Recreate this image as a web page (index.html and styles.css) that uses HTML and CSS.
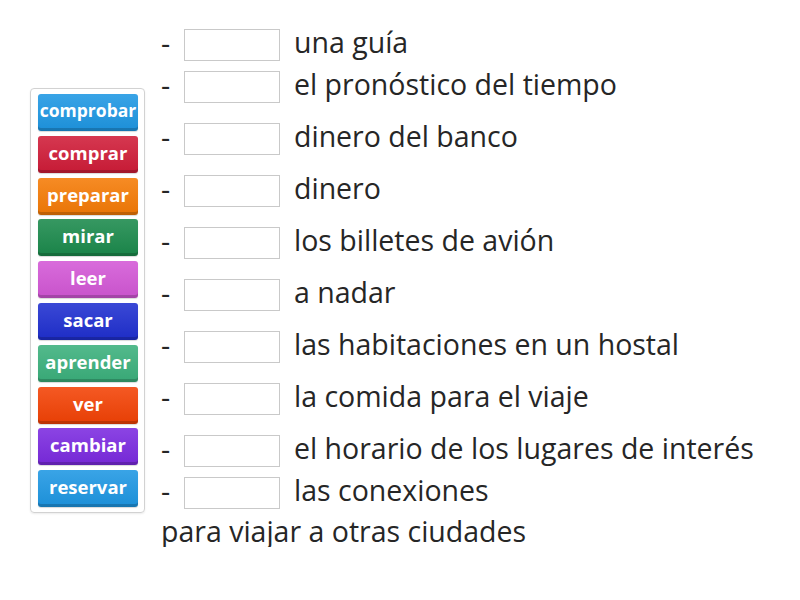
FILE: index.html
```html
<!DOCTYPE html>
<html lang="es">
<head>
<meta charset="utf-8">
<title>Completar</title>
<link rel="stylesheet" href="styles.css">
</head>
<body>
<div class="page">
  <div class="bank">
    <div class="tile t-blue fit">comprobar</div>
    <div class="tile t-red">comprar</div>
    <div class="tile t-orange">preparar</div>
    <div class="tile t-green">mirar</div>
    <div class="tile t-pink">leer</div>
    <div class="tile t-navy">sacar</div>
    <div class="tile t-teal">aprender</div>
    <div class="tile t-vermilion">ver</div>
    <div class="tile t-purple">cambiar</div>
    <div class="tile t-blue">reservar</div>
  </div>
  <div class="sentences">
    <div class="row first"><span class="dash">-</span><span class="slot"></span><span class="text">una guía</span></div>
    <div class="row tight"><span class="dash">-</span><span class="slot"></span><span class="text">el pronóstico del tiempo</span></div>
    <div class="row"><span class="dash">-</span><span class="slot"></span><span class="text">dinero del banco</span></div>
    <div class="row"><span class="dash">-</span><span class="slot"></span><span class="text">dinero</span></div>
    <div class="row"><span class="dash">-</span><span class="slot"></span><span class="text">los billetes de avión</span></div>
    <div class="row"><span class="dash">-</span><span class="slot"></span><span class="text">a nadar</span></div>
    <div class="row"><span class="dash">-</span><span class="slot"></span><span class="text">las habitaciones en un hostal</span></div>
    <div class="row"><span class="dash">-</span><span class="slot"></span><span class="text">la comida para el viaje</span></div>
    <div class="row"><span class="dash">-</span><span class="slot"></span><span class="text">el horario de los lugares de interés</span></div>
    <div class="row tight"><span class="dash">-</span><span class="slot"></span><span class="text">las conexiones</span></div>
    <div class="cont">para viajar a otras ciudades</div>
  </div>
</div>
</body>
</html>
```
FILE: styles.css
```css
html, body {
  margin: 0;
  padding: 0;
  background: #ffffff;
}

body {
  font-family: "Open Sans", "Liberation Sans", sans-serif;
  color: #262626;
}

.page {
  display: flex;
  align-items: flex-start;
  padding-left: 30px;
}

.bank {
  margin-top: 88px;
  width: 115px;
  box-sizing: border-box;
  border: 1px solid #d2d2d2;
  border-radius: 4px;
  padding: 5px 6px 5px 7px;
  display: flex;
  flex-direction: column;
  gap: 4.8px;
  box-shadow: 0 1px 2px rgba(0, 0, 0, 0.08);
}

.tile {
  height: 37px;
  border-radius: 3px;
  color: #ffffff;
  font-weight: 700;
  font-size: 18.5px;
  line-height: 33px;
  text-align: center;
  white-space: nowrap;
  overflow: hidden;
  box-shadow: inset 0 -3px 0 rgba(0, 0, 0, 0.18), 0 1px 1px rgba(0, 0, 0, 0.15);
  background-image: linear-gradient(rgba(255, 255, 255, 0.12), rgba(0, 0, 0, 0.05));
}

.tile.fit { font-size: 17.5px; }

.t-blue { background-color: #1e97e3; }
.t-red { background-color: #d01c38; }
.t-orange { background-color: #f57b06; }
.t-green { background-color: #1b8a4c; }
.t-pink { background-color: #d357d6; }
.t-navy { background-color: #1f2fd0; }
.t-teal { background-color: #3bb07c; }
.t-vermilion { background-color: #f34205; }
.t-purple { background-color: #7b2ae0; }

.sentences {
  margin-left: 16px;
  display: flex;
  flex-direction: column;
  font-size: 28.5px;
}

.row {
  display: flex;
  align-items: center;
  height: 32px;
  margin-top: 20px;
}

.row.first { margin-top: 29px; }
.row.tight { margin-top: 10px; }

.dash {
  width: 23px;
  line-height: 32px;
  margin-top: -5px;
}

.slot {
  width: 96px;
  height: 32px;
  box-sizing: border-box;
  border: 1px solid #c9c9c9;
  background: #ffffff;
}

.text {
  margin-left: 14px;
  line-height: 32px;
  margin-top: -7px;
  white-space: nowrap;
}

.cont {
  margin-top: 6px;
  line-height: 32px;
}
```
